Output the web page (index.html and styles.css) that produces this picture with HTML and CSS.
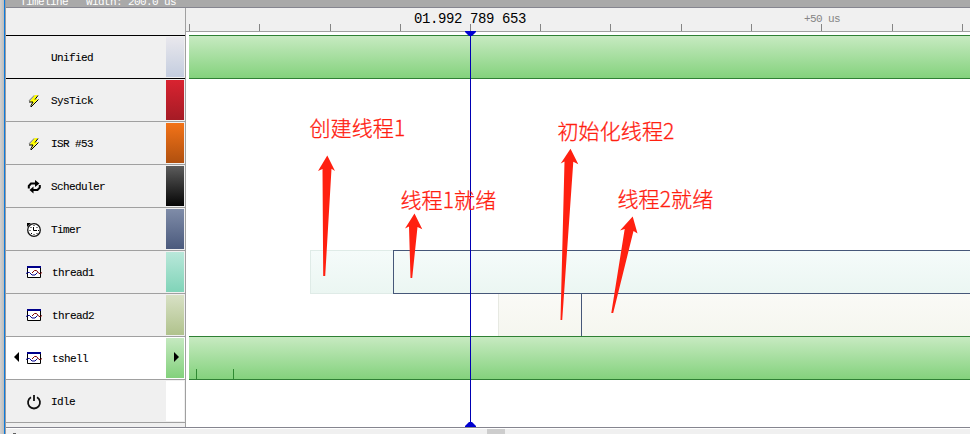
FILE: index.html
```
<!DOCTYPE html>
<html lang="zh-CN">
<head>
<meta charset="utf-8">
<title>Timeline</title>
<link rel="stylesheet" href="styles.css">
</head>
<body>
<svg class="defs" width="0" height="0" aria-hidden="true">
  <symbol id="bolt" viewBox="0 0 16 16">
    <path d="M8.500 2.500L3 8" fill="none" stroke="#909090" stroke-width="1.200"/>
    <path d="M9 2h3L9 6h3L5 13 7 9H3.500z" fill="#ff0"/>
    <path d="M12 2.500L9 6.500M12.500 6.500L5 14M3 9h4L5 12.500V14" fill="none" stroke="#000"/>
  </symbol>
  <symbol id="cycle" viewBox="0 0 16 16">
    <path d="M2.800 9.500V7L5 4.500H10M13.800 6V8.500L11.500 11H7" fill="none" stroke="#000" stroke-width="2"/>
    <path d="M9 1L13.500 4.500 9 8zM7.500 7.500L3.500 11 7.500 14.500z"/>
  </symbol>
  <symbol id="clock" viewBox="0 0 16 16">
    <circle cx="8" cy="8" r="6.300" fill="#fff" stroke="#111" stroke-width="1.300"/>
    <path d="M1 1h4L1 5z"/>
    <path d="M7.500 5v3.500H11" fill="none" stroke="#000"/>
    <path d="M8 3v1M8 12v1M3.500 8.500h1M12 8.500h1M4.500 5.500h1M5 11.500h1M10.500 11.500h1M10.500 5.500h1" stroke="#000"/>
  </symbol>
  <symbol id="thread" viewBox="0 0 16 16">
    <path d="M1.500 1.500h13v11h-13z" fill="#fff" stroke="#000"/>
    <path d="M1 1h14v2H1z" fill="#00008b"/>
    <path d="M0 8.500L2 7.500H3.500L6 10H9L11.500 7.500" fill="none" stroke="#00008b"/>
    <path d="M6 8L8.500 5.500H10.500L13 8.500H14.500L16 7.500" fill="none" stroke="#800000"/>
  </symbol>
  <symbol id="power" viewBox="0 0 16 16">
    <path d="M5 3.300A6 6 0 1 0 11 3.300M8 1v6" fill="none" stroke="#111" stroke-width="1.800"/>
  </symbol>
</svg>
<div class="window">
  <div class="frame-edge"></div>
  <div class="panel">
    <header class="title">Timeline   Width: 200.0 us</header>
    <main class="content">
      <aside class="sidebar">
        <div class="corner"></div>
        <div class="row strong"><span class="icon"></span><span class="name">Unified</span><i class="swatch unified"></i></div>
        <div class="row strong"><svg class="icon"><use href="#bolt"/></svg><span class="name">SysTick</span><i class="swatch systick"></i></div>
        <div class="row"><svg class="icon"><use href="#bolt"/></svg><span class="name">ISR #53</span><i class="swatch isr"></i></div>
        <div class="row"><svg class="icon"><use href="#cycle"/></svg><span class="name">Scheduler</span><i class="swatch scheduler"></i></div>
        <div class="row"><svg class="icon"><use href="#clock"/></svg><span class="name">Timer</span><i class="swatch timer"></i></div>
        <div class="row"><svg class="icon"><use href="#thread"/></svg><span class="name inset">thread1</span><i class="swatch thread1"></i></div>
        <div class="row"><svg class="icon"><use href="#thread"/></svg><span class="name inset">thread2</span><i class="swatch thread2"></i></div>
        <div class="row selected"><i class="previous"></i><svg class="icon"><use href="#thread"/></svg><span class="name inset">tshell</span><i class="swatch tshell"><b class="next"></b></i></div>
        <div class="row"><svg class="icon"><use href="#power"/></svg><span class="name">Idle</span><i class="swatch idle"></i></div>
        <div class="row end"></div>
      </aside>
      <section class="timeline">
        <div class="ruler">
          <svg class="ticks" width="784" height="23"><path d="M3.500 16v7M73.500 16v7M144.500 16v7M214.500 16v7M284.500 16v7M354.500 16v7M424.500 16v7M495.500 16v7M565.500 16v7M635.500 16v7M706.500 16v7M776.500 16v7" stroke="#858585"/></svg>
          <span class="time">01.992 789 653</span>
          <span class="offset">+50 us</span>
        </div>
        <div class="lanes">
          <div class="lane"><div class="run"></div></div>
          <div class="lane"></div><div class="lane"></div><div class="lane"></div><div class="lane"></div>
          <div class="lane first"><div class="created"></div><div class="ready"></div></div>
          <div class="lane second"><div class="created"></div><div class="ready"></div></div>
          <div class="lane"><div class="run"><svg width="60" height="42"><path d="M7.500 32v10M44.500 32v10" stroke="#2f8a32"/></svg></div></div>
          <div class="lane"></div>
        </div>
      </section>
    </main>
    <footer class="scrollbar"><i class="mark"></i><i class="thumb"></i></footer>
  </div>
  <svg class="overlay" width="970" height="434">
    <path d="M470.500 32v395" stroke="#0000b4"/>
    <path d="M465 31h11v1l-4 4h-3l-4-4zM465 427v-1l4-4h3l4 4v1z" fill="#0000d0"/>
    <g fill="#ff2010">
      <path d="M327.300 155.500L335 171 331.500 168.800 325.200 276H323.200L322.500 169 318 171z"/>
      <path d="M414.500 213.500L422.300 229.200 417.500 227 412.200 278H410.500L409 226.500 405 228.500z"/>
      <path d="M570.500 148.800L578.300 164.200 573.300 161.700 562.200 320H560.500L564.500 161.500 560.700 163.500z"/>
      <path d="M632.700 216.500L637.500 233.500 633.500 231 613.200 313H611.300L624.700 229 620 230.500z"/>
    </g>
  </svg>
  <span class="note create-one">创建线程1</span>
  <span class="note ready-one">线程1就绪</span>
  <span class="note init-two">初始化线程2</span>
  <span class="note ready-two">线程2就绪</span>
</div>
</body>
</html>
```

FILE: styles.css
```
* { box-sizing: border-box; }
body { margin: 0; overflow: hidden; background: #fff; }
.defs { position: absolute; }
.window {
  position: relative;
  display: flex;
  width: 970px;
  height: 434px;
  overflow: hidden;
  font: 11px/12px "Liberation Mono", monospace;
  letter-spacing: -0.6px;
  color: #000;
}
.frame-edge { width: 5px; background: linear-gradient(90deg, #d2d2d2, #bdbdbd); border-right: 1px solid #0b7bdc; }
.panel { width: 965px; border-left: 1px solid #9a9aa0; display: flex; flex-direction: column; }
.title {
  height: 8px;
  flex: none;
  padding-left: 14px;
  overflow: hidden;
  white-space: pre;
  line-height: 5px;
  color: #fff;
  background: #a9a9a9;
  border-bottom: 1px solid #85858f;
}
.content { display: flex; height: 420px; border-bottom: 1px solid #85858f; }
.sidebar { width: 180px; flex: none; background: #f0f0f0; border-right: 1px solid #a0a0a0; }
.corner { height: 27px; }
.row { position: relative; display: flex; align-items: flex-start; height: 43px; border-top: 1px solid #a0a0a0; }
.strong { border-color: #000; }
.row.end { height: 5px; }
.selected { background: #fff; }
.icon { width: 16px; height: 16px; margin: 14px 9px 0 20px; flex: none; }
.name { flex: 1; margin-top: 16px; -webkit-text-stroke: 0.1px #000; }
.inset { padding-left: 1px; }
.swatch { width: 18px; height: 40px; margin: 1px 1px 0 0; }
.unified { background: linear-gradient(#e9e8ed, #c4cddf); }
.systick { background: linear-gradient(#d92330, #a51b25); }
.isr { background: linear-gradient(#f37318, #b0500f); }
.scheduler { background: linear-gradient(#5c5c5c, #050505); }
.timer { background: linear-gradient(#7f8ca8, #4b5a7d); }
.thread1 { background: linear-gradient(#b9e8da, #80d4b8); }
.thread2 { background: linear-gradient(#d8e1c5, #b0c28c); }
.tshell { background: linear-gradient(#c5e9c0, #83d17c); }
.idle { background: #fff; }
.previous, .next { position: absolute; top: 15px; border: 5px solid transparent; }
.previous { left: 3px; border-right: 5px solid #000; }
.next { right: 1px; border-left: 5px solid #000; }
.timeline { flex: 1; min-width: 0; background: #fff; }
.ruler { position: relative; height: 24px; background: #f0f0f0; border-bottom: 1px solid #a0a0a0; }
.ticks { display: block; }
.time { position: absolute; left: 228px; top: 3px; font-size: 14px; line-height: 16px; letter-spacing: -0.4px; white-space: pre; }
.offset { position: absolute; left: 618px; top: 5px; color: #858585; }
.lanes { display: grid; grid-template-rows: repeat(9, 43px); margin-top: 3px; }
.lane { display: flex; }
.run { flex: 1; height: 44px; margin-left: 3px; border: solid #2f8034; border-width: 1px 0; background: linear-gradient(#c7eac1, #84d27d); }
.run svg { display: block; }
.first { padding-left: 124px; }
.first > div { height: 44px; background: linear-gradient(#f5fbfa, #ebf6f2); }
.first .created { width: 83px; border: 1px solid #dfebe7; border-right: 0; }
.first .ready { flex: 1; border: 1px solid #465779; border-right: 0; }
.second { padding: 1px 0 0 312px; }
.second > div { height: 42px; background: linear-gradient(#fafaf6, #f5f6ef); }
.second .created { width: 83px; border-left: 1px solid #e7e9e2; }
.second .ready { flex: 1; border-left: 1px solid #465779; }
.scrollbar { height: 6px; display: flex; background: #f0f0f0; border-top: 1px solid #fff; }
.mark { width: 3px; height: 1px; margin: 4px 0 0 7px; background: #606060; }
.thumb { width: 18px; margin-left: 471px; background: #cdcdcd; }
.overlay { position: absolute; left: 0; top: 0; }
.note { position: absolute; font: 300 21px/30px "Noto Sans CJK SC", sans-serif; letter-spacing: 0.1px; color: #ff2010; -webkit-text-stroke: 0.3px #ff2010; white-space: nowrap; }
.create-one { left: 309.500px; top: 112px; }
.ready-one { left: 400.500px; top: 184px; }
.init-two { left: 557.500px; top: 115px; }
.ready-two { left: 617.500px; top: 183px; }
```
